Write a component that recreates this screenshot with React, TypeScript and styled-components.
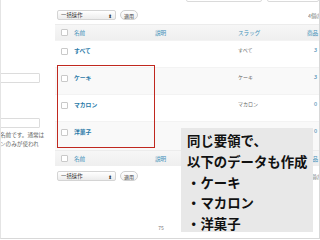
import React from "react";
import styled, { createGlobalStyle } from "styled-components";

const Global = createGlobalStyle`
  html, body { margin: 0; padding: 0; background: #ffffff; }
  body { width: 320px; height: 240px; overflow: hidden; font-family: "Noto Sans CJK JP", "Noto Sans", sans-serif; }
`;

const Frame = styled.div`
  position: relative;
  width: 318px;
  height: 238px;
  border-left: 1px solid #e4e4e4;
  border-right: 1px solid #d8d8d8;
  border-bottom: 1px solid #d8d8d8;
  display: flex;
  flex-direction: column;
  overflow: hidden;
  background: #fff;
`;

const Content = styled.div`
  flex: 1;
  display: flex;
  min-height: 0;
`;

const LeftPanel = styled.div`
  width: 54px;
  flex-shrink: 0;
  padding-top: 73px;
  display: flex;
  flex-direction: column;
  overflow: visible;
`;

const FieldBox = styled.div<{ $gap?: number }>`
  width: 44px;
  height: 10px;
  margin-left: -5px;
  margin-top: ${(p) => p.$gap ?? 0}px;
  border: 1px solid #dcdcdc;
  border-radius: 1px;
  background: #fff;
  box-sizing: border-box;
`;

const HelpText = styled.div<{ $top?: number }>`
  margin-top: ${(p) => p.$top ?? 3}px;
  margin-left: -1px;
  font-size: 5.6px;
  line-height: 9px;
  color: #666;
  white-space: nowrap;
`;

const Main = styled.div`
  flex: 1;
  position: relative;
  display: flex;
  flex-direction: column;
  overflow: hidden;
`;

const TopInputs = styled.div`
  height: 3px;
  overflow: hidden;
  display: flex;
  gap: 5px;
  padding-left: 131px;
`;

const TopBox = styled.div<{ $w: number }>`
  width: ${(p) => p.$w}px;
  height: 10px;
  margin-top: -8px;
  border: 1px solid #dadada;
  border-radius: 2px;
  box-sizing: border-box;
  flex-shrink: 0;
`;

const TableNav = styled.div<{ $top: number }>`
  display: flex;
  align-items: center;
  gap: 4px;
  height: 10px;
  margin-top: ${(p) => p.$top}px;
  padding-left: 2px;
`;

const Select = styled.div`
  width: 59px;
  height: 10px;
  box-sizing: border-box;
  border: 1px solid #d4d4d4;
  border-radius: 2px;
  background: linear-gradient(#ffffff, #ececec);
  display: flex;
  align-items: center;
  justify-content: space-between;
  padding: 0 3px 0 3px;
  font-size: 5.4px;
  color: #333;
`;

const Arrows = styled.span`
  font-size: 5px;
  color: #333;
  line-height: 1;
`;

const ApplyButton = styled.div`
  width: 18px;
  height: 10px;
  box-sizing: border-box;
  border: 1px solid #cfcfcf;
  border-radius: 5px;
  background: linear-gradient(#ffffff, #efefef);
  font-size: 5px;
  color: #444;
  display: flex;
  align-items: center;
  justify-content: center;
`;

const Count = styled.div`
  margin-left: auto;
  width: 11px;
  overflow: hidden;
  white-space: nowrap;
  font-size: 5.2px;
  color: #777;
`;

const Table = styled.div`
  position: relative;
  margin-top: 4px;
  display: flex;
  flex-direction: column;
`;

const Row = styled.div<{ $h: number; $bg: string; $head?: boolean }>`
  display: grid;
  grid-template-columns: 17px 83px 83px 69px 1fr;
  height: ${(p) => p.$h}px;
  background: ${(p) => p.$bg};
  align-items: ${(p) => (p.$head ? "center" : "start")};
  padding-top: ${(p) => (p.$head ? 0 : 5)}px;
  box-sizing: border-box;
  border-top: 1px solid ${(p) => (p.$head ? "#ececec" : "#f3f3f3")};
`;

const Check = styled.div<{ $head?: boolean }>`
  width: 5px;
  height: 5px;
  margin-left: 6px;
  margin-top: ${(p) => (p.$head ? 0 : 2)}px;
  border: 1px solid #c9c9c9;
  border-radius: 1px;
  background: #fff;
`;

const HeadCell = styled.div<{ $indent?: number }>`
  font-size: 5.6px;
  color: #3d8fb8;
  white-space: nowrap;
  padding-left: ${(p) => p.$indent ?? 0}px;
`;

const NameCell = styled.div`
  font-size: 5.8px;
  font-weight: 700;
  color: #2a7aa8;
  padding-left: 2px;
  white-space: nowrap;
`;

const SlugCell = styled.div`
  font-size: 5px;
  color: #666;
  white-space: nowrap;
`;

const CountCell = styled.div`
  font-size: 5.6px;
  color: #2a7aa8;
  text-align: right;
  padding-right: 2px;
`;

const Highlight = styled.div`
  position: absolute;
  left: 2px;
  top: 41px;
  width: 98px;
  height: 83px;
  box-sizing: border-box;
  border: 1.6px solid #c0281f;
  pointer-events: none;
`;

const PageNumber = styled.div`
  height: 15px;
  text-align: center;
  font-size: 5px;
  color: #777;
  padding-left: 2px;
  line-height: 9px;
`;

const Callout = styled.div`
  position: absolute;
  left: 180px;
  top: 128px;
  width: 132px;
  height: 104px;
  background: #e8e8e8;
  box-sizing: border-box;
  padding: 2px 0 0 6px;
  display: flex;
  flex-direction: column;
`;

const CalloutLine = styled.div`
  font-family: "Noto Sans CJK JP", sans-serif;
  font-weight: 700;
  font-size: 13.4px;
  line-height: 20.8px;
  color: #111;
  white-space: nowrap;
`;

type Item = { name: string; slug: string; count: string; h: number; bg: string };

const items: Item[] = [
  { name: "すべて", slug: "すべて", count: "3", h: 27, bg: "#ffffff" },
  { name: "ケーキ", slug: "ケーキ", count: "3", h: 27, bg: "#f9f9f9" },
  { name: "マカロン", slug: "マカロン", count: "0", h: 27, bg: "#ffffff" },
  { name: "洋菓子", slug: "洋菓子", count: "0", h: 29, bg: "#f9f9f9" },
];

function Nav({ top }: { top: number }) {
  return (
    <TableNav $top={top}>
      <Select>
        <span>一括操作</span>
        <Arrows>⬍</Arrows>
      </Select>
      <ApplyButton>適用</ApplyButton>
      <Count>4個の項目</Count>
    </TableNav>
  );
}

function HeadRow() {
  return (
    <Row $h={16} $bg="linear-gradient(#f6f6f6, #efefef)" $head>
      <Check $head />
      <HeadCell $indent={2}>名前</HeadCell>
      <HeadCell>説明</HeadCell>
      <HeadCell>スラッグ</HeadCell>
      <HeadCell>商品</HeadCell>
    </Row>
  );
}

export default function App() {
  return (
    <>
      <Global />
      <Frame>
        <Content>
          <LeftPanel>
            <FieldBox />
            <FieldBox $gap={35} />
            <HelpText>名前です。通常は</HelpText>
            <HelpText $top={0}>ンのみが使われ</HelpText>
          </LeftPanel>
          <Main>
            <TopInputs>
              <TopBox $w={76} />
              <TopBox $w={52} />
            </TopInputs>
            <Nav top={7} />
            <Table>
              <HeadRow />
              {items.map((it) => (
                <Row key={it.name} $h={it.h} $bg={it.bg}>
                  <Check />
                  <NameCell>{it.name}</NameCell>
                  <div />
                  <SlugCell>{it.slug}</SlugCell>
                  <CountCell>{it.count}</CountCell>
                </Row>
              ))}
              <HeadRow />
              <Highlight />
            </Table>
            <Nav top={5} />
          </Main>
        </Content>
        <PageNumber>75</PageNumber>
        <Callout>
          <CalloutLine>同じ要領で、</CalloutLine>
          <CalloutLine>以下のデータも作成</CalloutLine>
          <CalloutLine>・ケーキ</CalloutLine>
          <CalloutLine>・マカロン</CalloutLine>
          <CalloutLine>・洋菓子</CalloutLine>
        </Callout>
      </Frame>
    </>
  );
}
